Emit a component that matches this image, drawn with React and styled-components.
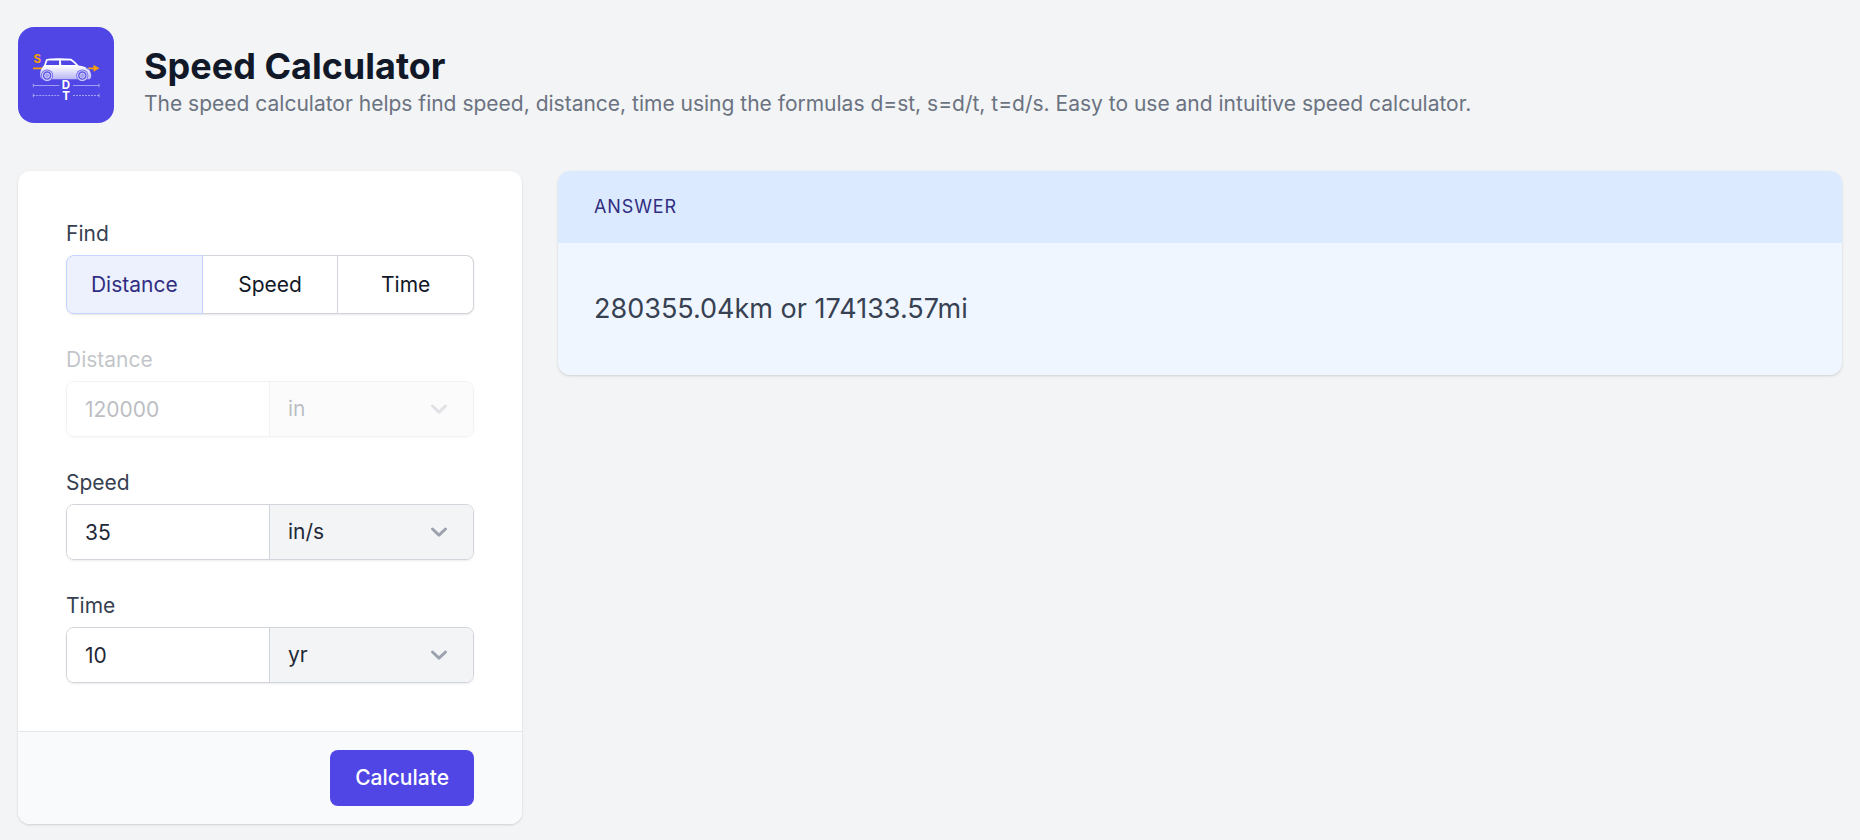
import React, { useState } from 'react';
import styled, { createGlobalStyle, css } from 'styled-components';

const GlobalStyle = createGlobalStyle`
  * {
    box-sizing: border-box;
  }

  body {
    margin: 0;
    background: #f2f4f6;
    color: #111827;
    font-family: Inter, "Liberation Sans", sans-serif;
    font-size: 21px;
    line-height: 30px;
  }

  button, input, select {
    font: inherit;
    color: inherit;
  }
`;

// every factor converts the unit to metres, metres per second or seconds
const UNITS = {
  distance: { in: 0.0254, ft: 0.3048, m: 1, km: 1000, mi: 1610 },
  speed: { 'in/s': 0.0254, 'ft/s': 0.3048, 'm/s': 1, 'km/h': 1 / 3.6, mph: 1610 / 3600 },
  time: { s: 1, min: 60, hr: 3600, day: 86400, yr: 31536000 },
};

const FIELDS = [
  { id: 'distance', label: 'Distance' },
  { id: 'speed', label: 'Speed' },
  { id: 'time', label: 'Time' },
];

const toBase = (id, field) => Number(field.value) * UNITS[id][field.unit];

const solve = (find, values) => {
  const d = toBase('distance', values.distance);
  const s = toBase('speed', values.speed);
  const t = toBase('time', values.time);

  if (find === 'distance') {
    return `${((s * t) / 1000).toFixed(2)}km or ${((s * t) / 1610).toFixed(2)}mi`;
  }
  if (find === 'speed') {
    return `${((d / t) * 3.6).toFixed(2)}km/h or ${(((d / t) * 3600) / 1610).toFixed(2)}mph`;
  }
  return `${(d / s).toFixed(2)}s or ${(d / s / 3600).toFixed(2)}hr`;
};

const START = {
  distance: { value: '120000', unit: 'in' },
  speed: { value: '35', unit: 'in/s' },
  time: { value: '10', unit: 'yr' },
};

const Logo = () => (
  <LogoTile viewBox="0 0 96 96" aria-hidden="true">
    <defs>
      <linearGradient id="body" x1="0" y1="0" x2="0" y2="1">
        <stop offset="0.35" stopColor="#fff" />
        <stop offset="1" stopColor="#b9b5f6" />
      </linearGradient>
    </defs>
    <rect width="96" height="96" rx="16" fill="#4f46e5" />
    <path d="M15 41.3h10M70 41.3h7" stroke="#f59e0b" strokeWidth="1.8" />
    <path d="M75.5 37.8l6 3.5-6 3.5z" fill="#f59e0b" />
    <text x="15.6" y="36.4" fontSize="11.5" fontWeight="700" fill="#f59e0b">S</text>
    <path
      d="M22.8 51c-1-3-.8-6.5.6-9 .9-1.7 2.3-3 3.1-5l1.3-4c.3-.8.8-1 1.6-1.1 7-.8 16-.8 23.9-.1 2.5 1.8 5 4 7.2 6.7 4 .5 8 1.5 10.5 4.2 1.4 1.7 2.5 4.5 2.2 7-.2 1.6-1.6 2.6-3 2.6H27c-2 0-3.9-.5-4.2-1.3z"
      fill="url(#body)"
    />
    <path d="M29.6 33.4h11.5v4.6H27.8zM42.8 33.4h9.7c2 1.2 3.7 2.7 5.3 4.6H43.3z" fill="#4f46e5" />
    <path d="M67.5 40.8l3.2.4 1 1.7-3-.6z" fill="#8e88ef" />
    {[29.1, 64.3].map((x) => (
      <g key={x} fill="none" stroke="#d3d0fa">
        <circle cx={x} cy="48.6" r="6" fill="#5e56e7" stroke="none" />
        <circle cx={x} cy="48.6" r="4.8" strokeWidth="1.1" />
        <circle cx={x} cy="48.6" r="2.5" fill="#a5a0f2" strokeWidth="0.9" />
      </g>
    ))}
    <g stroke="#c7c4fa" strokeWidth="0.7">
      <path d="M15.3 58.5h26M55 58.5h26M15.3 56.7v3.6M81 56.7v3.6" />
      <path d="M15.3 68.5h26M55 68.5h26" strokeDasharray="2 1" />
      <path d="M15.3 66.7v3.6M81 66.7v3.6" />
    </g>
    <g fill="#fff" fontSize="11.5" fontWeight="700" textAnchor="middle">
      <text x="48" y="62">D</text>
      <text x="48" y="72.6">T</text>
    </g>
  </LogoTile>
);

const Field = ({ id, label, field, disabled, onChange }) => (
  <FieldGroup $faded={disabled}>
    <Label htmlFor={id}>{label}</Label>
    <InputRow>
      <NumberInput
        id={id}
        type="text"
        inputMode="decimal"
        value={field.value}
        disabled={disabled}
        onChange={(e) => onChange(id, { ...field, value: e.target.value })}
      />
      <SelectWrapper>
        <UnitSelect
          aria-label={`${label} unit`}
          value={field.unit}
          disabled={disabled}
          onChange={(e) => onChange(id, { ...field, unit: e.target.value })}
        >
          {Object.keys(UNITS[id]).map((unit) => (
            <option key={unit}>{unit}</option>
          ))}
        </UnitSelect>
        <Chevron viewBox="0 0 24 24" aria-hidden="true">
          <path d="M5.5 9l6.5 6.2L18.5 9" />
        </Chevron>
      </SelectWrapper>
    </InputRow>
  </FieldGroup>
);

const App = () => {
  const [find, setFind] = useState('distance');
  const [values, setValues] = useState(START);
  const [answer, setAnswer] = useState(solve('distance', START));

  const handleChange = (id, field) => setValues({ ...values, [id]: field });

  const handleSubmit = (e) => {
    e.preventDefault();
    setAnswer(solve(find, values));
  };

  return (
    <Page>
      <GlobalStyle />
      <Header>
        <Logo />
        <Heading>
          <Title>Speed Calculator</Title>
          <Description>
            The speed calculator helps find speed, distance, time using the formulas d=st, s=d/t, t=d/s. Easy to use
            and intuitive speed calculator.
          </Description>
        </Heading>
      </Header>

      <Content>
        <FormCard onSubmit={handleSubmit}>
          <FormBody>
            <FieldGroup>
              <Label as="span" id="find-label">Find</Label>
              <Toggle role="group" aria-labelledby="find-label">
                {FIELDS.map(({ id, label }) => (
                  <ToggleButton
                    key={id}
                    type="button"
                    aria-pressed={find === id}
                    $active={find === id}
                    onClick={() => setFind(id)}
                  >
                    {label}
                  </ToggleButton>
                ))}
              </Toggle>
            </FieldGroup>
            {FIELDS.map(({ id, label }) => (
              <Field
                key={id}
                id={id}
                label={label}
                field={values[id]}
                disabled={find === id}
                onChange={handleChange}
              />
            ))}
          </FormBody>
          <FormFooter>
            <SubmitButton type="submit">Calculate</SubmitButton>
          </FormFooter>
        </FormCard>

        <AnswerCard>
          <AnswerTitle>Answer</AnswerTitle>
          <AnswerText>{answer}</AnswerText>
        </AnswerCard>
      </Content>
    </Page>
  );
};

const Page = styled.main`
  padding: 27px 18px 12px;
`;

const Header = styled.header`
  display: flex;
  align-items: center;
  gap: 30px;
  margin-bottom: 48px;
`;

const LogoTile = styled.svg`
  flex: none;
  width: 96px;
  height: 96px;
`;

const Heading = styled.div`
  padding-top: 12px;
`;

const Title = styled.h1`
  margin: 0;
  font-size: 36px;
  line-height: 45px;
  font-weight: 700;
`;

const Description = styled.p`
  margin: 0;
  color: #6b7280;
`;

const Content = styled.div`
  display: grid;
  grid-template-columns: 504px minmax(0, 1fr);
  align-items: start;
  gap: 36px;

  @media (max-width: 1100px) {
    grid-template-columns: minmax(0, 1fr);
  }
`;

const card = css`
  border-radius: 12px;
  overflow: hidden;
  box-shadow: 0 1px 3px rgba(0, 0, 0, 0.1), 0 1px 2px rgba(0, 0, 0, 0.06);
`;

const FormCard = styled.form`
  ${card}
  background: #fff;
`;

const FormBody = styled.div`
  display: flex;
  flex-direction: column;
  gap: 31px;
  padding: 48px;
`;

const FieldGroup = styled.div`
  display: flex;
  flex-direction: column;
  gap: 6px;
  opacity: ${({ $faded }) => ($faded ? 0.3 : 1)};
`;

const Label = styled.label`
  color: #374151;
`;

const Toggle = styled.div`
  display: flex;
  border-radius: 8px;
  box-shadow: 0 1px 2px rgba(0, 0, 0, 0.1);
`;

const ToggleButton = styled.button`
  flex: 1;
  height: 59px;
  padding: 0;
  background: ${({ $active }) => ($active ? '#edf1fe' : '#fff')};
  border: 1px solid ${({ $active }) => ($active ? '#c7d2fe' : '#d1d5db')};
  color: ${({ $active }) => ($active ? '#312e81' : '#111827')};
  cursor: pointer;

  & + & {
    border-left: 0;
  }

  &:first-child {
    border-radius: 8px 0 0 8px;
  }

  &:last-child {
    border-radius: 0 8px 8px 0;
  }
`;

const InputRow = styled.div`
  display: grid;
  grid-template-columns: repeat(2, minmax(0, 1fr));
  height: 56px;
  border: 1px solid #d1d5db;
  border-radius: 8px;
  overflow: hidden;
  box-shadow: 0 1px 2px rgba(0, 0, 0, 0.08);
`;

const NumberInput = styled.input`
  width: 100%;
  height: 100%;
  padding: 0 18px;
  background: #fff;
  border: 0;
  border-right: 1px solid #d1d5db;
  color: #1f2937;
`;

const SelectWrapper = styled.div`
  position: relative;
`;

const UnitSelect = styled.select`
  width: 100%;
  height: 100%;
  padding: 0 48px 0 18px;
  appearance: none;
  background: #f2f4f6;
  border: 0;
  border-radius: 0;
  color: #1f2937;
  opacity: 1;
`;

const Chevron = styled.svg`
  position: absolute;
  top: 50%;
  right: 22px;
  width: 24px;
  height: 24px;
  margin-top: -12px;
  fill: none;
  stroke: #9ca3af;
  stroke-width: 3;
  stroke-linecap: round;
  stroke-linejoin: round;
  pointer-events: none;
`;

const FormFooter = styled.div`
  display: flex;
  justify-content: flex-end;
  padding: 18px 48px;
  background: #f9fafc;
  border-top: 1px solid #e5e7eb;
`;

const SubmitButton = styled.button`
  height: 56px;
  padding: 0 25px;
  background: #4f46e5;
  border: 0;
  border-radius: 8px;
  color: #fff;
  font-weight: 500;
  cursor: pointer;
`;

const AnswerCard = styled.section`
  ${card}
  background: #eff6ff;
`;

const AnswerTitle = styled.h2`
  margin: 0;
  padding: 21px 36px;
  background: #dbeafe;
  color: #312e81;
  font-size: 18px;
  font-weight: 400;
  letter-spacing: 0.05em;
  text-transform: uppercase;
`;

const AnswerText = styled.p`
  margin: 0;
  padding: 48px 36px;
  color: #374151;
  font-size: 27px;
  line-height: 36px;
`;

export default App;
